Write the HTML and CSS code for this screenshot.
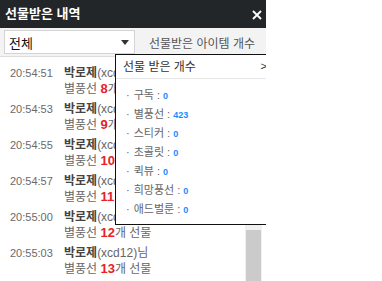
FILE: index.html
```html
<!DOCTYPE html>
<html lang="ko">
<head>
    <meta charset="UTF-8">
    <title>선물받은 내역</title>
    <link rel="stylesheet" href="styles.css">
</head>
<body>
    <div class="panel">
        <div class="head">
            <span class="head-title">선물받은 내역</span>
            <svg class="head-close" width="10" height="10" viewBox="0 0 10 10">
                <path d="M1 1L9 9M9 1L1 9" stroke="#fff" stroke-width="1.8" fill="none"/>
            </svg>
        </div>
        <div class="toolbar">
            <div class="select">
                <span>전체</span>
                <span class="select-arrow"></span>
            </div>
            <span class="toolbar-label">선물받은 아이템 개수</span>
        </div>
        <div class="body">
            <ul class="list">
                <li>
                    <span class="time">20:54:51</span>
                    <span class="who"><b>박로제</b>(xcd12)님</span>
                    <span class="what">별풍선 <em>8</em>개 선물</span>
                </li>
                <li>
                    <span class="time">20:54:53</span>
                    <span class="who"><b>박로제</b>(xcd12)님</span>
                    <span class="what">별풍선 <em>9</em>개 선물</span>
                </li>
                <li>
                    <span class="time">20:54:55</span>
                    <span class="who"><b>박로제</b>(xcd12)님</span>
                    <span class="what">별풍선 <em>10</em>개 선물</span>
                </li>
                <li>
                    <span class="time">20:54:57</span>
                    <span class="who"><b>박로제</b>(xcd12)님</span>
                    <span class="what">별풍선 <em>11</em>개 선물</span>
                </li>
                <li>
                    <span class="time">20:55:00</span>
                    <span class="who"><b>박로제</b>(xcd12)님</span>
                    <span class="what">별풍선 <em>12</em>개 선물</span>
                </li>
                <li>
                    <span class="time">20:55:03</span>
                    <span class="who"><b>박로제</b>(xcd12)님</span>
                    <span class="what">별풍선 <em>13</em>개 선물</span>
                </li>
            </ul>
            <div class="scroll">
                <div class="scroll-thumb"></div>
            </div>
        </div>

        <div class="count">
            <div class="count-head">
                <span>선물 받은 개수</span>
                <span class="count-more">&gt;</span>
            </div>
            <ul class="count-list">
                <li>구독 : <b>0</b></li>
                <li>별풍선 : <b>423</b></li>
                <li>스티커 : <b>0</b></li>
                <li>초콜릿 : <b>0</b></li>
                <li>퀵뷰 : <b>0</b></li>
                <li>희망풍선 : <b>0</b></li>
                <li>애드벌룬 : <b>0</b></li>
            </ul>
        </div>
    </div>
</body>
</html>
```

FILE: styles.css
```css
body {
    margin: 0;
    background: #fff;
    font-family: "Liberation Sans", "Noto Sans CJK KR", sans-serif;
}

ul,
li {
    margin: 0;
    padding: 0;
    list-style: none;
}

.panel {
    width: 266px;
    height: 281px;
    position: relative;
    overflow: hidden;
    display: flex;
    flex-direction: column;
    background: #fff;
}

.head {
    height: 28px;
    flex: none;
    background: #232629;
    color: #fff;
    display: flex;
    align-items: center;
    justify-content: space-between;
    padding: 0 4px 0 5px;
}

.head-title {
    font-size: 13px;
    font-weight: bold;
    margin-top: -3px;
}

.head-close {
    margin-top: 1px;
}

.toolbar {
    height: 28px;
    flex: none;
    background: #f3f3f3;
    border-bottom: 1px solid #ddd;
    display: flex;
    align-items: center;
    padding: 0 4px;
}

.select {
    height: 22px;
    width: 120px;
    border: 1px solid #d4d4d4;
    background: #fff;
    display: flex;
    align-items: center;
    justify-content: space-between;
    padding: 0 5px 0 4px;
    font-size: 13px;
    color: #111;
}

.select-arrow {
    width: 0;
    height: 0;
    border-left: 4px solid transparent;
    border-right: 4px solid transparent;
    border-top: 5px solid #333;
}

.toolbar-label {
    margin-left: 14px;
    font-size: 12px;
    color: #555;
}

.body {
    flex: 1;
    display: flex;
    min-height: 0;
}

.list {
    flex: 1;
    padding: 8px 0 0 10px;
    font-size: 12px;
    color: #666;
}

.list li {
    display: grid;
    grid-template-columns: 54px auto;
    grid-template-rows: 16px 16px;
    margin-bottom: 4px;
    white-space: nowrap;
}

.time {
    font-size: 11px;
    line-height: 16px;
    color: #6a6a6a;
}

.who {
    line-height: 16px;
    color: #666;
}

.who b {
    color: #444;
}

.what {
    grid-column: 2;
    line-height: 16px;
}

.what em {
    font-style: normal;
    font-weight: bold;
    font-size: 13px;
    color: #e8202a;
}

.scroll {
    width: 17px;
    margin-right: 4px;
    background: #f0f0f0;
    padding: 0 1px;
    box-sizing: border-box;
}

.scroll-thumb {
    margin-top: 173px;
    height: 60px;
    background: #cbcbcb;
}

.count {
    position: absolute;
    top: 54px;
    left: 115px;
    width: 160px;
    height: 169px;
    border: 1px solid #111;
    background: #fff;
}

.count-head {
    height: 24px;
    display: flex;
    align-items: center;
    justify-content: space-between;
    padding: 0 9px 2px 7px;
    box-sizing: border-box;
    border-bottom: 1px solid #e6e6e6;
    font-size: 12px;
    color: #333;
}

.count-more {
    font-size: 11px;
}

.count-list {
    padding: 7px 0 0 10px;
}

.count-list li {
    height: 19px;
    line-height: 19px;
    font-size: 11px;
    color: #666;
}

.count-list li::before {
    content: "·";
    margin-right: 4px;
}

.count-list b {
    font-size: 9px;
    color: #1a8cff;
}
```
